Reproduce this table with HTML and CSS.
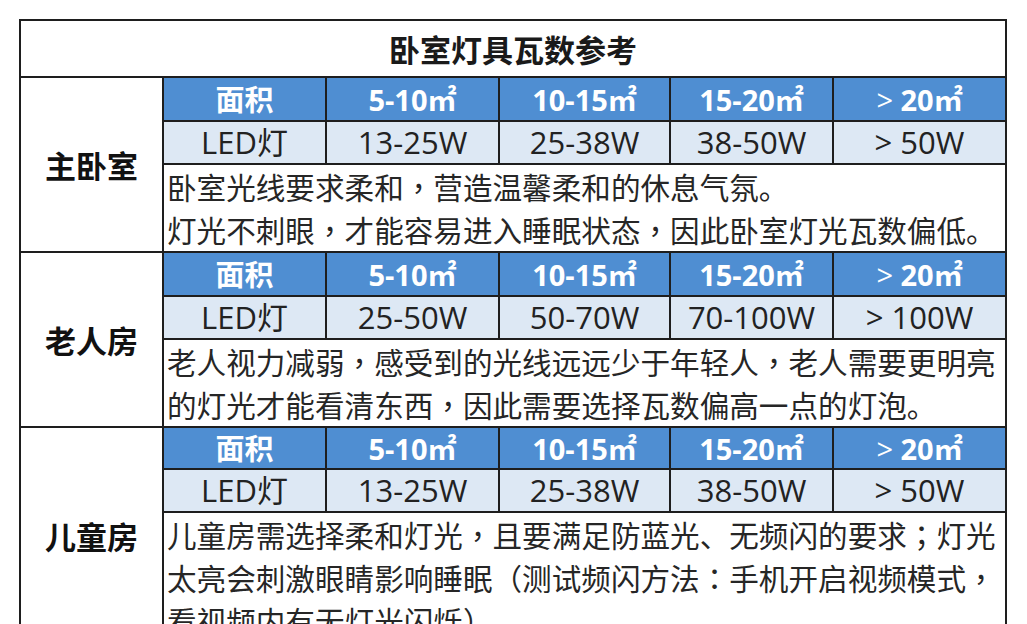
FILE: index.html
```html
<!DOCTYPE html>
<html lang="zh-CN">
<head>
<meta charset="utf-8">
<title>卧室灯具瓦数参考</title>
<link rel="stylesheet" href="styles.css">
</head>
<body>
<table class="ref">
  <colgroup>
    <col class="c-room">
    <col class="c1">
    <col class="c2">
    <col class="c3">
    <col class="c4">
    <col class="c5">
  </colgroup>
  <tr class="r-title"><td colspan="6" class="title">卧室灯具瓦数参考</td></tr>

  <tr class="r-head">
    <td rowspan="3" class="room">主卧室</td>
    <td class="head">面积</td>
    <td class="head">5-10㎡</td>
    <td class="head">10-15㎡</td>
    <td class="head">15-20㎡</td>
    <td class="head"><span class="gt">&gt;</span> 20㎡</td>
  </tr>
  <tr class="r-led">
    <td class="led">LED灯</td>
    <td class="led">13-25W</td>
    <td class="led">25-38W</td>
    <td class="led">38-50W</td>
    <td class="led">&gt; 50W</td>
  </tr>
  <tr class="r-text">
    <td colspan="5" class="desc">卧室光线要求柔和<span class="p" lang="zh-TW">，</span>营造温馨柔和的休息气氛。<br>灯光不刺眼<span class="p" lang="zh-TW">，</span>才能容易进入睡眠状态<span class="p" lang="zh-TW">，</span>因此卧室灯光瓦数偏低。</td>
  </tr>

  <tr class="r-head">
    <td rowspan="3" class="room">老人房</td>
    <td class="head">面积</td>
    <td class="head">5-10㎡</td>
    <td class="head">10-15㎡</td>
    <td class="head">15-20㎡</td>
    <td class="head"><span class="gt">&gt;</span> 20㎡</td>
  </tr>
  <tr class="r-led">
    <td class="led">LED灯</td>
    <td class="led">25-50W</td>
    <td class="led">50-70W</td>
    <td class="led">70-100W</td>
    <td class="led">&gt; 100W</td>
  </tr>
  <tr class="r-text">
    <td colspan="5" class="desc">老人视力减弱<span class="p" lang="zh-TW">，</span>感受到的光线远远少于年轻人<span class="p" lang="zh-TW">，</span>老人需要更明亮<br>的灯光才能看清东西<span class="p" lang="zh-TW">，</span>因此需要选择瓦数偏高一点的灯泡。</td>
  </tr>

  <tr class="r-head r-head3">
    <td rowspan="3" class="room">儿童房</td>
    <td class="head">面积</td>
    <td class="head">5-10㎡</td>
    <td class="head">10-15㎡</td>
    <td class="head">15-20㎡</td>
    <td class="head"><span class="gt">&gt;</span> 20㎡</td>
  </tr>
  <tr class="r-led">
    <td class="led">LED灯</td>
    <td class="led">13-25W</td>
    <td class="led">25-38W</td>
    <td class="led">38-50W</td>
    <td class="led">&gt; 50W</td>
  </tr>
  <tr class="r-text">
    <td colspan="5" class="desc">儿童房需选择柔和灯光<span class="p" lang="zh-TW">，</span>且要满足防蓝光、无频闪的要求<span class="p" lang="zh-TW">；</span>灯光<br>太亮会刺激眼睛影响睡眠（测试频闪方法<span class="p" lang="zh-TW">：</span>手机开启视频模式<span class="p" lang="zh-TW">，</span><br>看视频内有无灯光闪烁）</td>
  </tr>
</table>
</body>
</html>
```

FILE: styles.css
```css
html, body {
  margin: 0;
  padding: 0;
  background: #ffffff;
}

body {
  font-family: "Open Sans", "Noto Sans CJK SC", sans-serif;
  color: #222222;
}

.ref {
  border-collapse: collapse;
  table-layout: fixed;
  width: 986px;
  margin: 19px 0 0 19px;
}

.ref td {
  border: 2px solid #1e1e1e;
  padding: 0;
  text-align: center;
  vertical-align: middle;
  white-space: nowrap;
  overflow: hidden;
}

.c-room { width: 143px; }
.c1 { width: 163px; }
.c2 { width: 173px; }
.c3 { width: 171px; }
.c4 { width: 163px; }
.c5 { width: 173px; }

.r-title { height: 57px; }
.r-head { height: 44px; }
.r-head3 { height: 42px; }
.r-led { height: 43px; }

.title {
  font-family: "Noto Sans CJK SC", sans-serif;
  font-weight: 700;
  font-size: 31px;
  line-height: 1;
  color: #1a1a1a;
}

.room {
  font-family: "Noto Sans CJK SC", sans-serif;
  font-weight: 700;
  font-size: 31px;
  color: #111111;
}

.head {
  background: #4f8ed2;
  color: #ffffff;
  font-weight: 700;
  font-size: 29px;
  line-height: 1;
}

.head .gt {
  font-weight: 400;
}

.led {
  background: #dde8f4;
  color: #222222;
  font-size: 31px;
  line-height: 1;
}

.desc {
  font-family: "Noto Sans CJK SC", sans-serif;
  text-align: left !important;
  padding: 0 3px !important;
  font-size: 29.6px;
  line-height: 43px;
  color: #262626;
}

.desc .p {
  font-family: "Noto Sans CJK TC", "Noto Sans CJK SC", sans-serif;
}
```
